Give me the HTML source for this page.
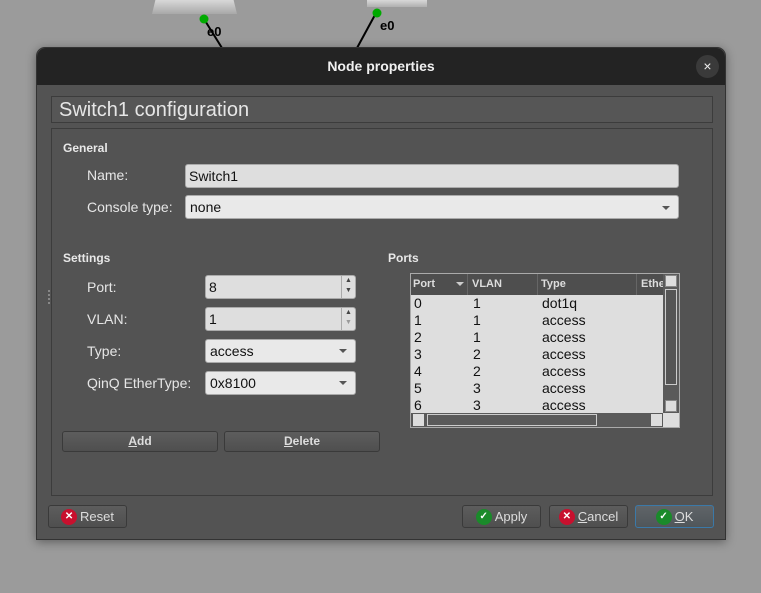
<!DOCTYPE html>
<html><head><style>
*{box-sizing:border-box;margin:0;padding:0}
body{width:761px;height:593px;background:#9b9b9b;position:relative;overflow:hidden;font-family:"Liberation Sans",sans-serif;font-size:14px;color:#e8e8e8}
.a{position:absolute}
.dlg{left:36px;top:47px;width:690px;height:493px;background:#535353;border-radius:9px 9px 0 0;box-shadow:0 2px 10px rgba(0,0,0,.4);border:1px solid #333}
.tb{left:0;top:0;width:688px;height:37px;background:#232323;border-radius:9px 9px 0 0;text-align:center;line-height:37px;font-weight:bold;font-size:14px;color:#f0f0f0}
.lbl{color:#e6e6e6;font-size:14px}
.b{font-weight:bold;font-size:12px;color:#e8e8e8}
.in{background:#dedede;border:1px solid #aaa;border-radius:3px;color:#111;font-size:14px;padding-left:3px;line-height:22px}
.btn{background:linear-gradient(#5d5d5d,#4f4f4f);border:1px solid #3a3a3a;border-radius:3px;text-align:center;font-size:12px;font-weight:bold;color:#ddd;line-height:19px}
.bb{display:flex;align-items:center;justify-content:center;font-weight:normal;font-size:13px}
.arr{position:absolute;right:8px;top:9px;border-left:4px solid transparent;border-right:4px solid transparent;border-top:4px solid #555}
.ic{display:inline-block;width:16px;height:16px;border-radius:50%;margin-right:3px;color:#fff;font-size:10px;line-height:16px;text-align:center;font-weight:bold}
.tbl{font-size:14px;color:#111}
.tbl div{position:absolute}
</style></head><body>
<div class="a" style="left:152px;top:0;width:85px;height:14px;background:linear-gradient(#d8d8d8,#a8a8a8);clip-path:polygon(4% 0,96% 0,100% 100%,0 100%)"></div>
<div class="a" style="left:367px;top:0;width:60px;height:7px;background:linear-gradient(#d8d8d8,#b0b0b0)"></div>
<svg class="a" style="left:0;top:0" width="761" height="50"><line x1="204" y1="19" x2="222" y2="48" stroke="#000" stroke-width="2"/><line x1="376" y1="13" x2="357" y2="48" stroke="#000" stroke-width="2"/><ellipse cx="204" cy="19" rx="4.5" ry="4.5" fill="#0a0"/><ellipse cx="377" cy="13" rx="4.5" ry="4.5" fill="#0a0"/><text x="207" y="36" font-weight="bold" font-size="13" font-family="Liberation Sans">e0</text><text x="380" y="30" font-weight="bold" font-size="13" font-family="Liberation Sans">e0</text></svg>
<div class="a dlg">
<div class="a tb">Node properties</div>
<div class="a" style="left:659px;top:7px;width:23px;height:23px;border-radius:50%;background:#3a3a3a;color:#eee;text-align:center;line-height:22px;font-size:14px">×</div>
</div>
<div class="a" style="left:51px;top:96px;width:662px;height:27px;border:1px solid #3c3c3c;background:#565656;font-size:20px;line-height:26px;padding-left:7px;color:#e6e6e6">Switch1 configuration</div>
<div class="a" style="left:51px;top:128px;width:662px;height:368px;border:1px solid #3c3c3c;background:#535353"></div>
<div class="a b" style="left:63px;top:141px">General</div>
<div class="a lbl" style="left:87px;top:167px">Name:</div>
<div class="a in" style="left:185px;top:164px;width:494px;height:24px">Switch1</div>
<div class="a lbl" style="left:87px;top:199px">Console type:</div>
<div class="a in" style="left:185px;top:195px;width:494px;height:24px;background:#e9e9e9;padding-left:4px">none<span class="arr" style="top:10px"></span></div>
<div class="a b" style="left:63px;top:251px">Settings</div>
<div class="a b" style="left:388px;top:251px">Ports</div>
<div class="a" style="left:48px;top:290px;width:2px;height:14px;border-left:2px dotted #888"></div>
<div class="a lbl" style="left:87px;top:279px">Port:</div>
<div class="a in" style="left:205px;top:275px;width:151px;height:24px">8<div class="a" style="right:0;top:0;width:14px;height:22px;border-left:1px solid #aaa;font-size:7px;color:#444;text-align:center;line-height:10px">▲<br>▼</div></div>
<div class="a lbl" style="left:87px;top:311px">VLAN:</div>
<div class="a in" style="left:205px;top:307px;width:151px;height:24px">1<div class="a" style="right:0;top:0;width:14px;height:22px;border-left:1px solid #aaa;font-size:7px;color:#444;text-align:center;line-height:10px">▲<br><span style="color:#999">▼</span></div></div>
<div class="a lbl" style="left:87px;top:343px">Type:</div>
<div class="a in" style="left:205px;top:339px;width:151px;height:24px;background:#e9e9e9;padding-left:4px">access<span class="arr"></span></div>
<div class="a lbl" style="left:87px;top:375px">QinQ EtherType:</div>
<div class="a in" style="left:205px;top:371px;width:151px;height:24px;background:#e9e9e9;padding-left:4px">0x8100<span class="arr"></span></div>
<div class="a btn" style="left:62px;top:431px;width:156px;height:21px"><u>A</u>dd</div>
<div class="a btn" style="left:224px;top:431px;width:156px;height:21px"><u>D</u>elete</div>
<div class="a" style="left:410px;top:273px;width:270px;height:155px;border:1px solid #aaa;background:#dedede"></div>
<div class="a" style="left:411px;top:274px;width:252px;height:21px;background:#4e4e4e;font-size:11px;font-weight:bold;color:#ddd;line-height:21px">
<div class="a" style="left:2px">Port</div><div class="a" style="left:45px;top:8px;border-left:4px solid transparent;border-right:4px solid transparent;border-top:4px solid #ccc"></div>
<div class="a" style="left:56px;top:0;height:21px;border-left:1px solid #666"></div><div class="a" style="left:61px">VLAN</div>
<div class="a" style="left:126px;top:0;height:21px;border-left:1px solid #666"></div><div class="a" style="left:130px">Type</div>
<div class="a" style="left:225px;top:0;height:21px;border-left:1px solid #666"></div><div class="a" style="left:230px">Ethe</div></div>
<div class="a" style="left:663px;top:274px;width:16px;height:139px;background:#5a5a5a"><div class="a" style="left:2px;top:1px;width:12px;height:12px;background:#ddd;border:1px solid #888"></div><div class="a" style="left:2px;top:15px;width:12px;height:96px;border:1px solid #ccc;background:#555"></div><div class="a" style="left:2px;top:126px;width:12px;height:12px;background:#ddd;border:1px solid #888"></div></div>
<div class="a" style="left:411px;top:413px;width:252px;height:14px;background:#5a5a5a"><div class="a" style="left:2px;top:1px;width:11px;height:12px;background:#ddd"></div><div class="a" style="left:16px;top:1px;width:170px;height:12px;border:1px solid #ccc"></div><div class="a" style="left:240px;top:1px;width:11px;height:12px;background:#ddd"></div></div>
<div class="a tbl" style="left:411px;top:295px;width:252px;height:118px;overflow:hidden">
<div style="left:3px;top:0">0</div><div style="left:62px;top:0">1</div><div style="left:131px;top:0">dot1q</div>
<div style="left:3px;top:17px">1</div><div style="left:62px;top:17px">1</div><div style="left:131px;top:17px">access</div>
<div style="left:3px;top:34px">2</div><div style="left:62px;top:34px">1</div><div style="left:131px;top:34px">access</div>
<div style="left:3px;top:51px">3</div><div style="left:62px;top:51px">2</div><div style="left:131px;top:51px">access</div>
<div style="left:3px;top:68px">4</div><div style="left:62px;top:68px">2</div><div style="left:131px;top:68px">access</div>
<div style="left:3px;top:85px">5</div><div style="left:62px;top:85px">3</div><div style="left:131px;top:85px">access</div>
<div style="left:3px;top:102px">6</div><div style="left:62px;top:102px">3</div><div style="left:131px;top:102px">access</div>
</div>
<div class="a btn bb" style="left:48px;top:505px;width:79px;height:23px"><span class="ic" style="background:#c8102e">✕</span>Reset</div>
<div class="a btn bb" style="left:462px;top:505px;width:79px;height:23px"><span class="ic" style="background:#1a8a2a">✓</span>Apply</div>
<div class="a btn bb" style="left:549px;top:505px;width:79px;height:23px"><span class="ic" style="background:#c8102e">✕</span><u>C</u>ancel</div>
<div class="a btn bb" style="left:635px;top:505px;width:79px;height:23px;border-color:#3b79a8;background:linear-gradient(#5f6468,#50565a)"><span class="ic" style="background:#1a8a2a">✓</span><u>O</u>K</div>
</body></html>
